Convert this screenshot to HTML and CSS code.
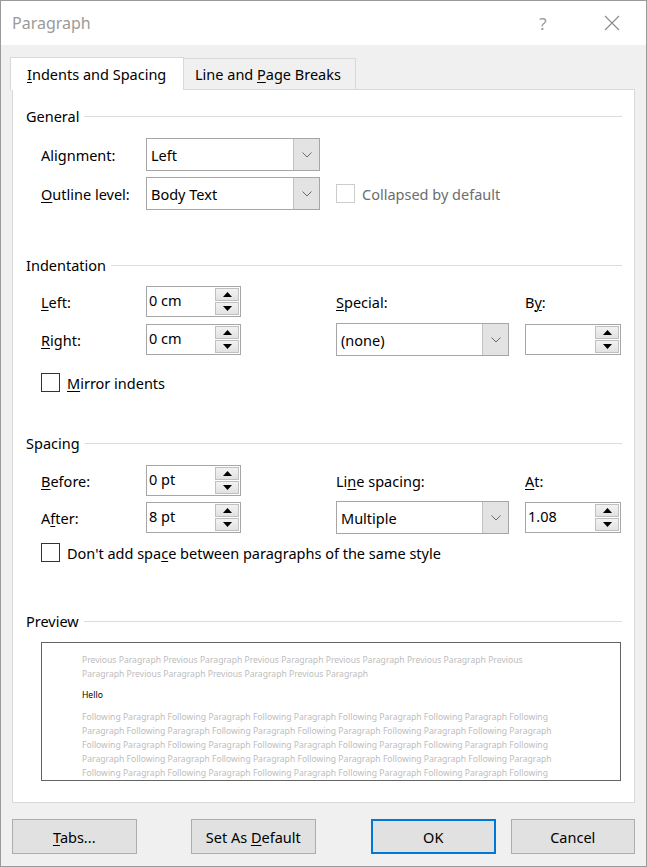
FILE: index.html
```html
<!DOCTYPE html>
<html>
<head>
<meta charset="utf-8">
<title>Paragraph</title>
<link rel="stylesheet" href="styles.css">
</head>
<body>
<div class="window">
  <div class="titlebar">
    <span class="title">Paragraph</span>
    <span class="help">?</span>
    <span class="close">
      <svg width="16" height="16" viewBox="0 0 16 16"><path d="M1 1 L15 15 M15 1 L1 15" stroke="#8a8a8a" stroke-width="1.1" fill="none"/></svg>
    </span>
  </div>
  <div class="client">
    <div class="tabs">
      <div class="tab active"><span><u>I</u>ndents and Spacing</span></div>
      <div class="tab"><span>Line and <u>P</u>age Breaks</span></div>
    </div>
    <div class="panel">
      <div class="group-head"><span>General</span></div>
      <div class="grid general">
        <div class="label">Alignment:</div>
        <div class="combo"><span class="ctext">Left</span><span class="carrow"><svg width="10" height="6" viewBox="0 0 10 6"><path d="M0.5 0.5 L5 5 L9.5 0.5" stroke="#6a6a6a" fill="none"/></svg></span></div>
        <div></div>
        <div></div>
        <div class="label"><u>O</u>utline level:</div>
        <div class="combo"><span class="ctext">Body Text</span><span class="carrow"><svg width="10" height="6" viewBox="0 0 10 6"><path d="M0.5 0.5 L5 5 L9.5 0.5" stroke="#6a6a6a" fill="none"/></svg></span></div>
        <div></div>
        <div class="check disabled"><span class="box"></span><span>Collapsed by default</span></div>
      </div>

      <div class="group-head gap-indent"><span>Indentation</span></div>
      <div class="grid indent">
        <div class="label"><u>L</u>eft:</div>
        <div class="spin"><span class="sval">0 cm</span><span class="sbtns"><span class="sbtn"><svg width="9" height="5" viewBox="0 0 9 5"><path d="M0 5 L4.5 0 L9 5 Z" fill="#000"/></svg></span><span class="sbtn"><svg width="9" height="5" viewBox="0 0 9 5"><path d="M0 0 L4.5 5 L9 0 Z" fill="#000"/></svg></span></span></div>
        <div></div>
        <div class="label"><u>S</u>pecial:</div>
        <div></div>
        <div class="label">B<u>y</u>:</div>

        <div class="label"><u>R</u>ight:</div>
        <div class="spin"><span class="sval">0 cm</span><span class="sbtns"><span class="sbtn"><svg width="9" height="5" viewBox="0 0 9 5"><path d="M0 5 L4.5 0 L9 5 Z" fill="#000"/></svg></span><span class="sbtn"><svg width="9" height="5" viewBox="0 0 9 5"><path d="M0 0 L4.5 5 L9 0 Z" fill="#000"/></svg></span></span></div>
        <div></div>
        <div class="combo"><span class="ctext">(none)</span><span class="carrow"><svg width="10" height="6" viewBox="0 0 10 6"><path d="M0.5 0.5 L5 5 L9.5 0.5" stroke="#6a6a6a" fill="none"/></svg></span></div>
        <div></div>
        <div class="spin"><span class="sval"></span><span class="sbtns"><span class="sbtn"><svg width="9" height="5" viewBox="0 0 9 5"><path d="M0 5 L4.5 0 L9 5 Z" fill="#000"/></svg></span><span class="sbtn"><svg width="9" height="5" viewBox="0 0 9 5"><path d="M0 0 L4.5 5 L9 0 Z" fill="#000"/></svg></span></span></div>
      </div>
      <div class="check mirror"><span class="box"></span><span><u>M</u>irror indents</span></div>

      <div class="group-head gap-spacing"><span>Spacing</span></div>
      <div class="grid spacing">
        <div class="label"><u>B</u>efore:</div>
        <div class="spin"><span class="sval">0 pt</span><span class="sbtns"><span class="sbtn"><svg width="9" height="5" viewBox="0 0 9 5"><path d="M0 5 L4.5 0 L9 5 Z" fill="#000"/></svg></span><span class="sbtn"><svg width="9" height="5" viewBox="0 0 9 5"><path d="M0 0 L4.5 5 L9 0 Z" fill="#000"/></svg></span></span></div>
        <div></div>
        <div class="label">Li<u>n</u>e spacing:</div>
        <div></div>
        <div class="label"><u>A</u>t:</div>

        <div class="label">A<u>f</u>ter:</div>
        <div class="spin"><span class="sval">8 pt</span><span class="sbtns"><span class="sbtn"><svg width="9" height="5" viewBox="0 0 9 5"><path d="M0 5 L4.5 0 L9 5 Z" fill="#000"/></svg></span><span class="sbtn"><svg width="9" height="5" viewBox="0 0 9 5"><path d="M0 0 L4.5 5 L9 0 Z" fill="#000"/></svg></span></span></div>
        <div></div>
        <div class="combo"><span class="ctext">Multiple</span><span class="carrow"><svg width="10" height="6" viewBox="0 0 10 6"><path d="M0.5 0.5 L5 5 L9.5 0.5" stroke="#6a6a6a" fill="none"/></svg></span></div>
        <div></div>
        <div class="spin"><span class="sval">1.08</span><span class="sbtns"><span class="sbtn"><svg width="9" height="5" viewBox="0 0 9 5"><path d="M0 5 L4.5 0 L9 5 Z" fill="#000"/></svg></span><span class="sbtn"><svg width="9" height="5" viewBox="0 0 9 5"><path d="M0 0 L4.5 5 L9 0 Z" fill="#000"/></svg></span></span></div>
      </div>
      <div class="check dontadd"><span class="box"></span><span>Don't add spa<u>c</u>e between paragraphs of the same style</span></div>

      <div class="group-head gap-preview"><span>Preview</span></div>
      <div class="preview">
        <div class="pline">Previous Paragraph Previous Paragraph Previous Paragraph Previous Paragraph Previous Paragraph Previous</div>
        <div class="pline">Paragraph Previous Paragraph Previous Paragraph Previous Paragraph</div>
        <div class="pline hello">Hello</div>
        <div class="pline follow">Following Paragraph Following Paragraph Following Paragraph Following Paragraph Following Paragraph Following</div>
        <div class="pline">Paragraph Following Paragraph Following Paragraph Following Paragraph Following Paragraph Following Paragraph</div>
        <div class="pline">Following Paragraph Following Paragraph Following Paragraph Following Paragraph Following Paragraph Following</div>
        <div class="pline">Paragraph Following Paragraph Following Paragraph Following Paragraph Following Paragraph Following Paragraph</div>
        <div class="pline">Following Paragraph Following Paragraph Following Paragraph Following Paragraph Following Paragraph Following</div>
      </div>
    </div>
    <div class="buttons">
      <div class="btn"><span><u>T</u>abs...</span></div>
      <div class="btn btn-default"><span>Set As <u>D</u>efault</span></div>
      <div class="btn btn-ok"><span>OK</span></div>
      <div class="btn btn-cancel"><span>Cancel</span></div>
    </div>
  </div>
</div>
</body>
</html>
```

FILE: styles.css
```css
* { box-sizing: border-box; }
html, body { margin: 0; padding: 0; background: #f0f0f0; }
body {
  font-family: "Noto Sans", "Open Sans", sans-serif;
  font-size: 14.5px;
  color: #000;
}
u { text-decoration: underline; text-underline-offset: 2px; text-decoration-thickness: 1px; }

.window {
  width: 647px;
  height: 867px;
  border: 1px solid #9a9a9a;
  display: flex;
  flex-direction: column;
  background: #f0f0f0;
}

.titlebar {
  height: 44px;
  flex: none;
  background: #fff;
  display: flex;
  align-items: center;
  padding-left: 11px;
}
.title {
  font-size: 16px;
  color: #9a9a9a;
  flex: 1;
}
.help {
  font-size: 17px;
  color: #9a9a9a;
  width: 20px;
  text-align: center;
  margin-right: 51px;
}
.close {
  display: flex;
  margin-right: 26px;
}

.client {
  flex: 1;
  padding: 12px 11px 0 11px;
  display: flex;
  flex-direction: column;
}

.tabs {
  display: flex;
  height: 32px;
  margin-left: -2px;
  position: relative;
  z-index: 1;
}
.tab {
  height: 31px;
  margin-top: 1px;
  border: 1px solid #d9d9d9;
  border-bottom: none;
  background: #f0f0f0;
  padding: 0 11px;
  display: flex;
  align-items: center;
  white-space: nowrap;
}
.tab.active {
  height: 33px;
  margin-top: 0;
  background: #fff;
  padding: 0 16px;
  width: 174px;
  border-color: #d9d9d9;
}
.tab:not(.active) {
  width: 172px;
  border-left: none;
}

.panel {
  height: 714px;
  flex: none;
  background: #fff;
  border: 1px solid #d9d9d9;
  padding: 16px 12px 0 13px;
}

.group-head {
  height: 20px;
  display: flex;
  align-items: center;
  gap: 5px;
}
.group-head::after {
  content: "";
  flex: 1;
  height: 1px;
  background: #dcdcdc;
}
.gap-indent { margin-top: 45px; }
.gap-spacing { margin-top: 41px; }
.gap-preview { margin-top: 49px; }

.grid {
  display: grid;
  margin-left: 15px;
  align-items: center;
}
.general {
  margin-top: 12px;
  grid-template-columns: 105px 174px 16px 1fr;
  grid-template-rows: 33px 33px;
  row-gap: 6px;
}
.indent {
  margin-top: 11px;
  grid-template-columns: 105px 95px 95px 173px 16px 96px;
  grid-template-rows: 31px 33px;
  row-gap: 6px;
}
.spacing {
  margin-top: 12px;
  grid-template-columns: 105px 95px 95px 173px 16px 96px;
  grid-template-rows: 31px 33px;
  row-gap: 5px;
}

.label { white-space: nowrap; }

.combo {
  height: 33px;
  border: 1px solid #a6a6a6;
  background: #fff;
  display: flex;
}
.ctext {
  flex: 1;
  padding-left: 4px;
  display: flex;
  align-items: center;
}
.carrow {
  width: 26px;
  background: #e3e3e3;
  border-left: 1px solid #c2c2c2;
  display: flex;
  align-items: center;
  justify-content: center;
}

.spin {
  height: 31px;
  border: 1px solid #a6a6a6;
  background: #fff;
  display: flex;
}
.sval {
  flex: 1;
  padding-left: 2px;
  display: flex;
  align-items: center;
  margin-top: -3px;
}
.sbtns {
  width: 26px;
  padding: 1px;
  display: flex;
  flex-direction: column;
  gap: 1px;
}
.sbtn {
  flex: 1;
  background: linear-gradient(#f2f2f2, #e2e2e2);
  border: 1px solid #c0c0c0;
  display: flex;
  align-items: center;
  justify-content: center;
}

.check {
  display: flex;
  align-items: center;
  gap: 7px;
  white-space: nowrap;
  height: 19px;
}
.box {
  width: 19px;
  height: 19px;
  border: 1px solid #333;
  background: #fff;
  flex: none;
}
.check.disabled { color: #6d6d6d; }
.check.disabled .box { border-color: #cccccc; }
.mirror { margin: 17px 0 0 15px; }
.dontadd { margin: 9px 0 0 15px; }

.preview {
  margin: 11px 0 0 15px;
  width: 580px;
  height: 139px;
  border: 1px solid #646464;
  background: #fff;
  padding: 10px 0 0 40px;
  overflow: hidden;
}
.pline {
  font-size: 8.6px;
  line-height: 14px;
  height: 14px;
  color: #bdbdbd;
  white-space: nowrap;
}
.pline.hello {
  color: #000;
  margin-top: 7px;
}
.pline.follow { margin-top: 8px; }

.buttons {
  display: flex;
  padding-top: 16px;
}
.btn {
  width: 125px;
  height: 35px;
  background: #e1e1e1;
  border: 1px solid #adadad;
  display: flex;
  align-items: center;
  justify-content: center;
  white-space: nowrap;
}
.btn-default { margin-left: 54px; width: 126px; }
.btn-ok {
  margin-left: 55px;
  border: 2px solid #0078d7;
}
.btn-cancel { margin-left: 15px; }
```
